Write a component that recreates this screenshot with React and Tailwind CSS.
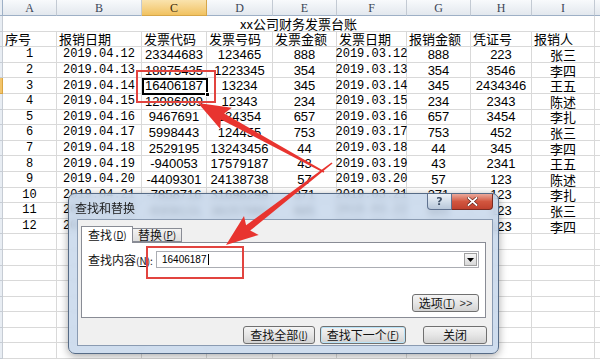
import React from "react";

const CJK = "font-['Noto_Sans_CJK_SC',sans-serif]";
const MONO = "font-['Liberation_Mono',monospace]";
const SANS = "font-['Liberation_Sans',Arial,sans-serif]";

// column widths A..I, then J takes the rest
const widths = [54, 85, 65, 66, 64, 70, 64, 61, 63];
const letters = ["A", "B", "C", "D", "E", "F", "G", "H", "I"];
const wcls = [
  "w-[54px]", "w-[85px]", "w-[65px]", "w-[66px]", "w-[64px]",
  "w-[70px]", "w-[64px]", "w-[61px]", "w-[63px]",
];

const headers = ["序号", "报销日期", "发票代码", "发票号码", "发票金额", "发票日期", "报销金额", "凭证号", "报销人"];

const rows = [
  ["1", "2019.04.12", "23344683", "123465", "888", "2019.03.12", "888", "223", "张三"],
  ["2", "2019.04.13", "18875435", "1223345", "354", "2019.03.13", "354", "3546", "李四"],
  ["3", "2019.04.14", "16406187", "13234", "345", "2019.03.14", "345", "2434346", "王五"],
  ["4", "2019.04.15", "12986989", "12343", "234", "2019.03.15", "234", "2343", "陈述"],
  ["5", "2019.04.16", "9467691", "124354", "657", "2019.03.16", "657", "3454", "李扎"],
  ["6", "2019.04.17", "5998443", "124455", "753", "2019.03.17", "753", "452", "张三"],
  ["7", "2019.04.18", "2529195", "13243456", "44", "2019.03.18", "44", "345", "李四"],
  ["8", "2019.04.19", "-940053", "17579187", "43", "2019.03.19", "43", "2341", "王五"],
  ["9", "2019.04.20", "-4409301", "24138738", "57", "2019.03.20", "57", "123", "陈述"],
  ["10", "2019.04.21", "-7858716", "31698299", "371", "2019.03.21", "371", "123", "李扎"],
  ["11", "2019.04.22", "-9308131", "38257860", "685", "2019.03.22", "685", "123", "张三"],
  ["12", "2019.04.23", "-1075754", "44817421", "999", "2019.03.23", "999", "123", "李四"],
];

function cellFont(i) {
  if (i === 0 || i === 1 || i === 5) return `${MONO} text-[12px]`;
  if (i === 8) return `${CJK} text-[13px]`;
  return `${SANS} text-[13px]`;
}

function RowHead({ active }) {
  return (
    <div
      className={`w-[3px] shrink-0 border-r border-b ${
        active ? "bg-[#f3c46a] border-[#d9a542]" : "bg-[#e8edf3] border-[#c6ccd4]"
      }`}
    />
  );
}

function arrowPoints(sx, sy, tx, ty, head, hw, w0, w1) {
  const dx = tx - sx;
  const dy = ty - sy;
  const len = Math.hypot(dx, dy);
  const ux = dx / len;
  const uy = dy / len;
  const nx = -uy;
  const ny = ux;
  const bx = tx - ux * head;
  const by = ty - uy * head;
  const back = 4;
  const pts = [
    [sx + nx * w0, sy + ny * w0],
    [bx + nx * w1, by + ny * w1],
    [bx - ux * back + nx * hw, by - uy * back + ny * hw],
    [tx, ty],
    [bx - ux * back - nx * hw, by - uy * back - ny * hw],
    [bx - nx * w1, by - ny * w1],
    [sx - nx * w0, sy - ny * w0],
  ];
  return pts.map((p) => p[0].toFixed(1) + "," + p[1].toFixed(1)).join(" ");
}

function WinButton({ className = "", children }) {
  return (
    <div
      className={`h-[18px] flex items-center justify-center rounded-[3px] border border-[#707070] bg-gradient-to-b from-[#f4f4f4] via-[#e6e6e6] to-[#d2d2d2] text-[12px] text-[#111] ${CJK} leading-none ${className}`}
    >
      {children}
    </div>
  );
}

function FindDialog() {
  return (
    <div className="absolute left-[68px] top-[193px] w-[431px] h-[161px] rounded-[7px] border border-[#566b86] bg-[#c3d5ea]/80 backdrop-blur-[3px] shadow-[0_2px_8px_rgba(0,0,0,0.35)] flex flex-col">
      {/* title bar */}
      <div className="h-[25px] flex items-start justify-between pl-[6px] pr-[5px]">
        <span className={`${CJK} text-[12px] leading-none text-[#1b1b1b] mt-[8px]`}>查找和替换</span>
        <div className="flex">
          <div className="w-[25px] h-[16px] flex items-center justify-center rounded-bl-[4px] border border-t-0 border-[#5f7290] bg-gradient-to-b from-[#eef3f8] via-[#d3deea] to-[#b8c7d9] text-[11px] font-bold text-[#3e4f66] font-['DejaVu_Sans',sans-serif] leading-none">
            ?
          </div>
          <div className="w-[41px] h-[16px] flex items-center justify-center rounded-br-[4px] border border-t-0 border-l-0 border-[#7a2b22] bg-gradient-to-b from-[#e9a89b] via-[#d2563f] to-[#c0412e]">
            <svg width="11" height="9" viewBox="0 0 11 9">
              <path d="M1.5 1 L9.5 8 M9.5 1 L1.5 8" stroke="#5a1a12" strokeWidth="3" strokeLinecap="square" />
              <path d="M1.5 1 L9.5 8 M9.5 1 L1.5 8" stroke="#ffffff" strokeWidth="1.8" strokeLinecap="square" />
            </svg>
          </div>
        </div>
      </div>

      {/* body */}
      <div className="ml-[8px] w-[416px] h-[127px] bg-[#f0f0f0] border border-[#8a9bb2] flex flex-col px-[3px] pt-[5px]">
        {/* tabs */}
        <div className="flex items-end h-[17px]">
          <div className={`relative z-10 w-[52px] h-[17px] -mb-[1px] bg-white border border-b-0 border-[#898c95] flex items-center pl-[6px] ${CJK} text-[12px] leading-none text-[#111]`}>
            查找<span className="text-[10px] ml-[1px]">(<span className="underline">D</span>)</span>
          </div>
          <div className={`w-[49px] h-[14px] bg-gradient-to-b from-[#f3f3f3] to-[#dedede] border border-l-0 border-[#898c95] flex items-center pl-[5px] ${CJK} text-[12px] leading-none text-[#111]`}>
            替换<span className="text-[10px] ml-[1px]">(<span className="underline">P</span>)</span>
          </div>
        </div>
        {/* tab panel */}
        <div className="w-[405px] h-[76px] bg-white border border-[#898c95] flex flex-col pl-[6px] pr-[6px] pt-[8px]">
          <div className="flex items-center h-[17px]">
            <span className={`${CJK} text-[12px] leading-none text-[#111] w-[68px]`}>
              查找内容<span className="text-[10px]">(<span className="underline">N</span>):</span>
            </span>
            <div className="flex-1 h-[17px] border border-[#abadb3] flex items-center justify-between pl-[5px] pr-[1px]">
              <span className={`${SANS} text-[10px] leading-none text-black flex items-center`}>
                16406187<span className="w-[1px] h-[11px] bg-black ml-[1px]" />
              </span>
              <div className="w-[13px] h-[13px] border border-[#a0a0a0] bg-gradient-to-b from-[#f6f6f6] to-[#d8d8d8] flex items-center justify-center">
                <svg width="7" height="4" viewBox="0 0 7 4">
                  <path d="M0 0 H7 L3.5 4 Z" fill="#000" />
                </svg>
              </div>
            </div>
          </div>
          <div className="flex justify-end mt-[26px]">
            <WinButton className="w-[67px] h-[17px]">
              选项<span className="text-[10px]">(<span className="underline">T</span>)</span>
              <span className={`${SANS} text-[11px] ml-[4px] text-[#333]`}>&gt;&gt;</span>
            </WinButton>
          </div>
        </div>
        {/* bottom buttons */}
        <div className="flex mt-[8px] pl-[162px]">
          <WinButton className="w-[72px]">
            查找全部<span className="text-[10px]">(<span className="underline">I</span>)</span>
          </WinButton>
          <WinButton className="w-[86px] ml-[5px] border-[#3c7fb1] from-[#eaf6fd] via-[#d9f0fc] to-[#a7d9f5] shadow-[inset_0_0_0_1px_#b8e3f8]">
            查找下一个<span className="text-[10px]">(<span className="underline">F</span>)</span>
          </WinButton>
          <WinButton className="w-[64px] ml-[17px]">关闭</WinButton>
        </div>
      </div>
    </div>
  );
}

export default function App() {
  const emptyRows = Array.from({ length: 9 });
  return (
    <div className="relative w-[600px] h-[359px] overflow-hidden bg-white select-none">
      {/* column headers */}
      <div className="flex h-[16px]">
        <div className="w-[3px] shrink-0 bg-[#e8edf3] border-r border-b border-[#9eb0c6]" />
        {letters.map((l, i) => (
          <div
            key={l}
            className={`${wcls[i]} shrink-0 flex items-center justify-center border-r border-b font-['Liberation_Serif',serif] text-[12px] leading-none ${
              i === 2
                ? "bg-gradient-to-b from-[#fae3ad] to-[#f1c25f] border-[#d6a649] text-[#3a2a08]"
                : "bg-gradient-to-b from-[#f8fafc] to-[#e3e8ee] border-[#c3cad3] border-b-[#9eb0c6] text-[#3c4656]"
            }`}
          >
            {l}
          </div>
        ))}
        <div className="flex-1 bg-gradient-to-b from-[#f8fafc] to-[#e3e8ee] border-b border-[#9eb0c6]" />
      </div>

      {/* title row (merged A:I) */}
      <div className="flex h-[15.6px]">
        <RowHead />
        <div className={`w-[592px] shrink-0 border-r border-b border-[#d9d9d9] flex items-center justify-center ${CJK} text-[13px] leading-none text-black`}>
          xx公司财务发票台账
        </div>
        <div className="flex-1 border-b border-[#d9d9d9]" />
      </div>

      {/* header row */}
      <div className="flex h-[15.6px]">
        <RowHead />
        {headers.map((h, i) => (
          <div
            key={h}
            className={`${wcls[i]} shrink-0 border-r border-b border-[#d9d9d9] flex items-center pl-[2px] ${CJK} text-[13px] leading-none text-black whitespace-nowrap`}
          >
            {h}
          </div>
        ))}
        <div className="flex-1 border-b border-[#d9d9d9]" />
      </div>

      {/* data rows */}
      {rows.map((r, ri) => (
        <div key={ri} className="flex h-[15.6px]">
          <RowHead active={ri === 2} />
          {r.map((v, i) => (
            <div
              key={i}
              className={`${wcls[i]} shrink-0 border-r border-b border-[#d9d9d9] flex items-center justify-center ${cellFont(i)} leading-none text-black whitespace-nowrap overflow-visible`}
            >
              {v}
            </div>
          ))}
          <div className="flex-1 border-b border-[#d9d9d9]" />
        </div>
      ))}

      {/* empty rows */}
      {emptyRows.map((_, ri) => (
        <div key={"e" + ri} className="flex h-[15.6px]">
          <RowHead />
          {widths.map((w, i) => (
            <div key={i} className={`${wcls[i]} shrink-0 border-r border-b border-[#d9d9d9]`} />
          ))}
          <div className="flex-1 border-b border-[#d9d9d9]" />
        </div>
      ))}

      {/* active cell C3 */}
      <div className="absolute left-[142px] top-[77.6px] w-[66px] h-[17.2px] border-2 border-black pointer-events-none">
        <div className="absolute -right-[4px] -bottom-[4px] w-[5px] h-[5px] bg-black border border-white" />
      </div>

      {/* red highlight around the cell */}
      <div className="absolute left-[136px] top-[70px] w-[80px] h-[33px] border-2 border-[#e2443f] pointer-events-none" />

      <FindDialog />

      {/* red highlight around the input */}
      <div className="absolute left-[146px] top-[246px] w-[98px] h-[33px] border-2 border-[#e2443f] pointer-events-none" />

      {/* arrows */}
      <svg className="absolute left-0 top-0 pointer-events-none" width="600" height="359" viewBox="0 0 600 359">
        <polygon points={arrowPoints(324, 172, 198, 103, 28, 12, 0.8, 3.4)} fill="#e8342f" />
        <polygon points={arrowPoints(332, 163, 226, 245, 28, 12, 0.8, 3.4)} fill="#e8342f" />
      </svg>
    </div>
  );
}
